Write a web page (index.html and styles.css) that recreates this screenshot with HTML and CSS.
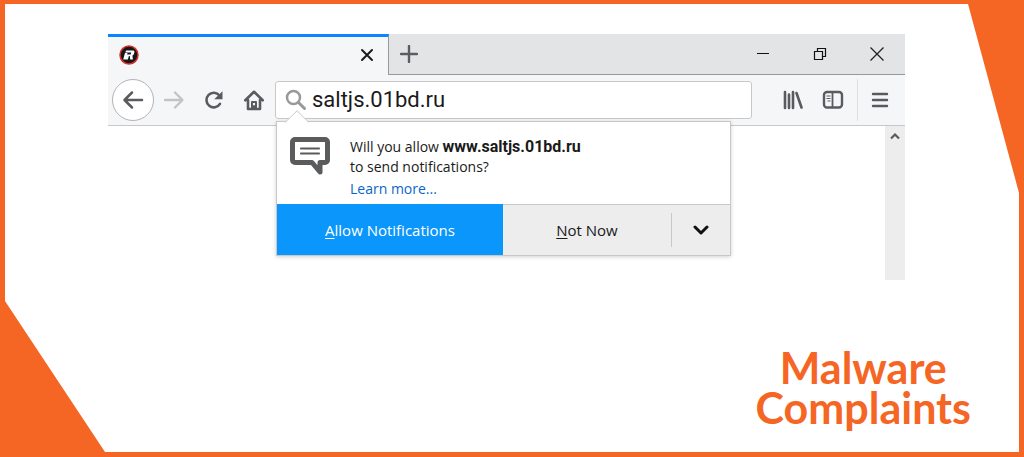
FILE: index.html
```html
<!DOCTYPE html>
<html lang="en">
<head>
    <meta charset="UTF-8">
    <meta name="viewport" content="width=device-width, initial-scale=1.0">
    <title>Malware Complaints - saltjs.01bd.ru</title>
    <link rel="stylesheet" href="styles.css">
</head>
<body>
    <main class="frame">
        <section class="browser">
            <div class="tab-strip">
                <div class="tab">
                    <svg class="favicon" width="20" height="20" viewBox="0 0 20 20">
                        <circle cx="10" cy="10" r="9" fill="#17171b" stroke="#d9302c" stroke-width="1.5"/>
                        <path d="M7 5.5h7.2q1.6 0 1.2 1.7l-.5 1.8q-.4 1.3-1.5 1.4l.5 4.1h-2.7l-.4-3.600h-.9l-1 3.600H4.200L6 8h2.500l-.4 1.400h3.600l.5-1.800H6.400z" fill="#fff"/>
                    </svg>
                    <button class="tab-close" aria-label="Close tab">
                        <svg width="14" height="14" viewBox="0 0 14 14"><path d="M2 2l10 10M12 2L2 12" stroke="#1c1c1f" stroke-width="2" stroke-linecap="round"/></svg>
                    </button>
                </div>
                <button class="new-tab" aria-label="New tab">
                    <svg width="18" height="18" viewBox="0 0 18 18"><path d="M9 1v16M1 9h16" stroke="#5c5d60" stroke-width="2.4" stroke-linecap="round"/></svg>
                </button>
                <div class="window-controls">
                    <button aria-label="Minimize">
                        <svg width="14" height="14" viewBox="0 0 14 14"><path d="M1 6.5h12" stroke="#111"/></svg>
                    </button>
                    <button aria-label="Restore">
                        <svg width="14" height="14" viewBox="0 0 14 14" fill="none" stroke="#111" stroke-width="1.2"><path d="M1.5 4.5h8v8h-8zM4.5 4.5v-3h8v8h-3"/></svg>
                    </button>
                    <button aria-label="Close window">
                        <svg width="14" height="14" viewBox="0 0 14 14"><path d="M.5 .5l13 13M13.5 .5L.5 13.5" stroke="#222" stroke-width="1.3"/></svg>
                    </button>
                </div>
            </div>

            <div class="toolbar">
                <button class="back" aria-label="Back">
                    <svg width="22" height="20" viewBox="0 0 22 20"><path d="M20 10H3M10 2.5L2.5 10l7.500 7.500" fill="none" stroke="#5a5b5e" stroke-width="2.5" stroke-linecap="round" stroke-linejoin="round"/></svg>
                </button>
                <button class="tool" aria-label="Forward">
                    <svg width="22" height="20" viewBox="0 0 22 20"><path d="M2 10h17M12 2.5L19.5 10 12 17.5" fill="none" stroke="#c2c3c5" stroke-width="2.3" stroke-linecap="round" stroke-linejoin="round"/></svg>
                </button>
                <button class="tool" aria-label="Reload">
                    <svg width="20" height="20" viewBox="0 0 20 20"><path d="M16 13.8A7.3 7.3 0 1 1 15.5 5.5" fill="none" stroke="#5a5b5e" stroke-width="2.6" stroke-linecap="round"/><path d="M18.5 1.2v8h-8.300z" fill="#5a5b5e"/></svg>
                </button>
                <button class="tool" aria-label="Home">
                    <svg width="22" height="22" viewBox="0 0 22 22" fill="none" stroke="#5a5b5e" stroke-width="2.6" stroke-linecap="round" stroke-linejoin="round"><path d="M2.3 11.3L11 2.8l8.700 8.500M5 11v9h12v-9"/><path d="M9 19v-6h4v6M11 17v2" stroke-width="2"/></svg>
                </button>

                <div class="url-bar">
                    <svg class="search-icon" width="22" height="22" viewBox="0 0 22 22"><circle cx="8.5" cy="8.5" r="6.5" fill="none" stroke="#999" stroke-width="2.5"/><path d="M13.5 13.5l6 6" stroke="#999" stroke-width="3" stroke-linecap="round"/></svg>
                    <input class="url-input" type="text" value="saltjs.01bd.ru" aria-label="Address">

                    <div class="popup" role="dialog" aria-label="Notification permission">
                        <svg class="popup-arrow" width="26" height="13" viewBox="0 0 26 13"><path d="M1 12.5L13 .8l12 11.700V13H1z" fill="#fff"/><path d="M1 12.5L13 .8l12 11.700" fill="none" stroke="#c8c8c8"/></svg>
                        <div class="popup-body">
                            <svg class="bubble" width="40" height="40" viewBox="0 0 40 40">
                                <path d="M5 2.5h30a2.500 2.500 0 0 1 2.500 2.500v18a2.500 2.500 0 0 1-2.500 2.500h-5v9.500l-8-9.500H5A2.500 2.500 0 0 1 2.500 23V5A2.500 2.500 0 0 1 5 2.500z" fill="#fff" stroke="#5a5b5d" stroke-width="5" stroke-linejoin="round"/>
                                <path d="M11 11.5h18M11 16.5h18" stroke="#5a5b5d" stroke-width="2.2" stroke-linecap="round"/>
                            </svg>
                            <div class="message">
                                <p>Will you allow <strong>www.saltjs.01bd.ru</strong><br>to send notifications?</p>
                                <a href="#">Learn more...</a>
                            </div>
                        </div>
                        <div class="popup-actions">
                            <button class="allow"><span><u>A</u>llow Notifications</span></button>
                            <button class="not-now"><span><u>N</u>ot Now</span></button>
                            <button class="more" aria-label="More options">
                                <svg width="16" height="10" viewBox="0 0 16 10"><path d="M2 2l6 6 6-6" fill="none" stroke="#111" stroke-width="3" stroke-linecap="round" stroke-linejoin="round"/></svg>
                            </button>
                        </div>
                    </div>
                </div>

                <div class="toolbar-end">
                    <button class="tool" aria-label="Library">
                        <svg width="20" height="20" viewBox="0 0 20 20"><path d="M2 2v16M6 4.5V18M10 2v16M13.500 3l5 14.500" stroke="#5a5b5e" stroke-width="2.6" stroke-linecap="round"/></svg>
                    </button>
                    <button class="tool" aria-label="Sidebars">
                        <svg width="22" height="20" viewBox="0 0 22 20"><rect x="2" y="2" width="18" height="15.5" rx="3" fill="none" stroke="#5a5b5e" stroke-width="2.4"/><path d="M10.5 2v15.500" stroke="#5a5b5e" stroke-width="1.8"/><path d="M4.5 6h4M4.5 8.5h4M5.5 11h3" stroke="#5a5b5e" stroke-width="1.2"/></svg>
                    </button>
                    <button class="tool menu" aria-label="Open menu">
                        <svg width="18" height="18" viewBox="0 0 18 18"><path d="M2 3h14M2 9h14M2 15h14" stroke="#5a5b5e" stroke-width="2.4" stroke-linecap="round"/></svg>
                    </button>
                </div>
            </div>

            <div class="viewport">
                <div class="scrollbar">
                    <svg width="10" height="8" viewBox="0 0 10 8"><path d="M1 6.5l4-4 4 4" fill="none" stroke="#5a5a5a" stroke-width="2.2"/></svg>
                </div>
            </div>
        </section>

        <h1 class="title">Malware<br>Complaints</h1>
    </main>
</body>
</html>
```
FILE: styles.css
```css
* {
    box-sizing: border-box;
}
body {
    margin: 0;
    padding: 4px 5px 5px;
    min-height: 100vh;
    display: flex;
    background-color: #f56624;
    font-family: "Open Sans", "Noto Sans", sans-serif;
}
button {
    display: flex;
    align-items: center;
    justify-content: center;
    padding: 0;
    border: none;
    background: none;
    font-family: inherit;
    cursor: pointer;
}
svg {
    display: block;
    flex: none;
}
.frame {
    flex: 1;
    display: flex;
    flex-direction: column;
    justify-content: space-between;
    padding: 30px 48px 24px 103px;
    background-color: #fff;
    clip-path: polygon(0 0, calc(100% - 51px) 0, 100% 189px, 100% 100%, 100px 100%, 0 calc(100% - 151px));
}

/* Browser window */
.browser {
    margin-right: 66px;
}
.tab-strip {
    display: flex;
    height: 41px;
    background-color: #e3e4e6;
}
.tab {
    width: 281px;
    display: flex;
    align-items: center;
    justify-content: space-between;
    padding: 0 14px 2px 11px;
    background-color: #f5f6f8;
    border-top: 3px solid #0a84ff;
    border-right: 1px solid #98999b;
}
.new-tab {
    width: 40px;
    border-bottom: 1px solid #98999b;
}
.window-controls {
    flex: 1;
    display: flex;
    justify-content: flex-end;
    border-bottom: 1px solid #98999b;
}
.window-controls button {
    width: 57px;
}
.toolbar {
    display: flex;
    align-items: center;
    height: 51px;
    padding: 0 4px;
    background-color: #f5f6f8;
    border-bottom: 1px solid #c8c8ca;
}
.back {
    width: 42px;
    height: 42px;
    border: 1px solid #b4b4b6;
    border-radius: 50%;
    background-color: #fff;
}
.tool {
    width: 40px;
    height: 42px;
}
.url-bar {
    position: relative;
    flex: 1;
    display: flex;
    align-items: center;
    height: 38px;
    margin-left: 1px;
    padding-left: 9px;
    background-color: #fff;
    border: 1px solid #c8c8c8;
    border-radius: 3px;
}
.url-input {
    flex: 1;
    min-width: 0;
    padding: 0 5px 2px;
    border: none;
    outline: none;
    background: none;
    color: #1a1a1a;
    font-family: Roboto, sans-serif;
    font-size: 22px;
}
.toolbar-end {
    display: flex;
    padding-left: 21px;
}
.menu {
    width: 44px;
    margin-left: 4px;
    border-left: 1px solid #dedfe1;
}
.viewport {
    display: flex;
    justify-content: flex-end;
    height: 154px;
}
.scrollbar {
    width: 20px;
    padding: 6px 5px;
    background-color: #ededed;
}

/* Permission popup */
.popup {
    position: absolute;
    top: 39px;
    left: 0;
    width: 455px;
    background-color: #fff;
    border: 1px solid #c8c8c8;
    box-shadow: 0 1px 4px rgba(0,0,0,0.18);
}
.popup-arrow {
    position: absolute;
    top: -12px;
    left: 7px;
}
.popup-body {
    display: flex;
    gap: 20px;
    padding: 15px 13px 5px;
}
.message {
    color: #1a1a1a;
    font-size: 14px;
    line-height: 20px;
}
.message p {
    margin: 0 0 2px;
}
.message strong {
    font-family: Roboto, sans-serif;
    font-size: 16px;
}
.message a {
    display: block;
    color: #0a66c8;
    text-decoration: none;
}
.popup-actions {
    display: flex;
    align-items: center;
    height: 51px;
    background-color: #ededed;
}
.popup-actions button {
    height: 100%;
    font-size: 15px;
    color: #1a1a1a;
}
.popup-actions u {
    text-underline-offset: 2px;
}
.popup-actions .allow {
    width: 226px;
    background-color: #0a96fa;
    color: #fff;
}
.popup-actions .not-now {
    flex: 1;
    border-top: 1px solid #c8c8c8;
}
.popup-actions .more {
    width: 59px;
    border-top: 1px solid #c8c8c8;
    background: linear-gradient(#c8c8c8, #c8c8c8) left center / 1px 34px no-repeat;
}

.title {
    align-self: flex-end;
    margin: 0;
    color: #f56624;
    font-family: Lato, sans-serif;
    font-size: 43px;
    font-weight: 700;
    line-height: 40px;
    text-align: center;
}
```
